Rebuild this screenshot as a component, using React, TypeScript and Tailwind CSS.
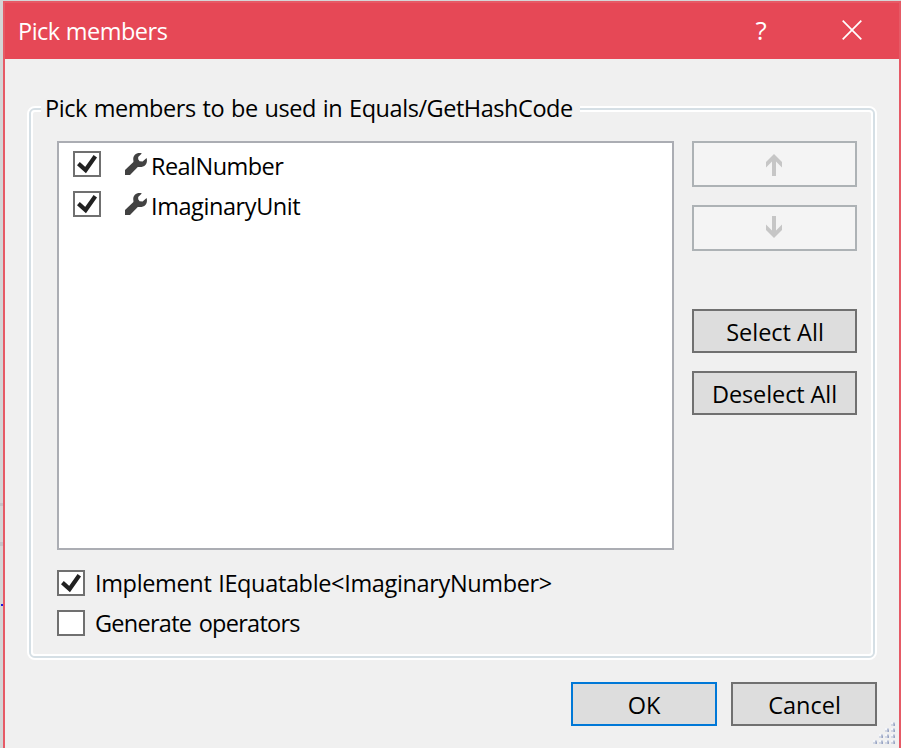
import type { ReactNode } from "react";

function CheckBox({ checked }: { checked?: boolean }) {
  return (
    <span className="block h-[26px] w-[28px] shrink-0 border-2 border-[#707070] bg-white">
      {checked && (
        <svg width="24" height="22" viewBox="0 0 24 22" className="block">
          <path d="M3.4 10.6 L10.6 17 L20.3 3.2" fill="none" stroke="#212121" strokeWidth="4.2" />
        </svg>
      )}
    </span>
  );
}

function Wrench() {
  return (
    <svg width="22" height="22" viewBox="0 0 22 22" className="block shrink-0" fill="#424242">
      <path d="M16.8 0.4 C14.5 -0.3 11.6 0 9.9 1.8 C8.3 3.4 8 5.6 8.4 7.6 L8.4 9 L0 17 L0 22 L5 22 L12.8 14 L14 14 C16.4 14.3 18.8 13.6 20.4 12 C22 10.2 22.3 7.2 21.6 5 L17.6 8.6 L14.6 8.2 L13.2 6.2 L13.2 4 Z" />
    </svg>
  );
}

function Arrow({ down }: { down?: boolean }) {
  return (
    <svg width="16" height="22" viewBox="0 0 16 22" className={down ? "block rotate-180" : "block"}>
      <path d="M8 0 L16 8 V13.5 L10 7.6 V22 H6 V7.6 L0 13.5 V8 Z" fill="#c6c6c6" />
    </svg>
  );
}

function Button({ className, children }: { className: string; children: ReactNode }) {
  return (
    <button className={`flex h-[44px] items-center justify-center border-2 bg-[#dddddd] pt-[2px] leading-[32px] ${className}`}>
      {children}
    </button>
  );
}

function Grip() {
  const cells = [
    [18, 0], [12, 6], [18, 6], [6, 12], [12, 12], [18, 12], [0, 18], [6, 18], [12, 18], [18, 18],
  ];
  return (
    <svg width="22" height="22" viewBox="0 0 22 22" className="absolute bottom-[4px] right-[4px]">
      {cells.map(([x, y]) => (
        <g key={`${x}-${y}`}>
          <rect x={x} y={y} width="4" height="4" fill="#d3d8e4" />
          <rect x={x} y={y} width="2" height="2" fill="#f4f6fa" />
          <rect x={x + 2} y={y + 1} width="2" height="3" fill="#b3bcd2" />
          <rect x={x + 3} y={y + 2} width="1" height="2" fill="#98a4c4" />
        </g>
      ))}
    </svg>
  );
}

export default function App() {
  return (
    <div className="relative flex h-[748px] w-[901px] overflow-hidden bg-[#d5d5d6] pl-[3px] pt-px font-['Open_Sans','Noto_Sans',sans-serif] text-[23.5px] text-black">
      <div className="absolute left-0 top-[503px] h-[3px] w-[3px] bg-[#c3c4c8]" />
      <div className="absolute left-0 top-[542px] h-[4px] w-[3px] bg-[#c3c4c8]" />
      <div className="absolute left-[1px] top-[604px] h-[2px] w-[2px] bg-[#1a1ae0]" />

      <div className="relative flex w-[898px] flex-col border-x-2 border-t-2 border-[#e65a66] bg-[#f0f0f0]">
        <header className="flex h-[56px] shrink-0 items-start bg-[#e64856] pl-[13px] pt-[12px] leading-[32px] text-white">
          <h1 className="flex-1 tracking-[-0.5px] [word-spacing:0.5px]">Pick members</h1>
          <span className="-mt-px mr-[75px] w-[12px] text-center text-[26px]">?</span>
          <svg width="20" height="20" viewBox="0 0 20 20" className="mr-[37px] mt-[5px] block">
            <path d="M0.7 0.7 L19.3 19.3 M19.3 0.7 L0.7 19.3" stroke="#fff" strokeWidth="1.7" fill="none" />
          </svg>
        </header>

        <section className="relative mx-[22px] mt-[47px] h-[554px] shrink-0 rounded-[8px] border-2 border-white">
          <div className="h-full rounded-[6px] border-2 border-[#d5dfe5]">
            <div className="flex h-full flex-col rounded-[4px] border-2 border-white pl-[24px] pt-[29px]">
              <div className="flex h-[409px] gap-[18px]">
                <ul className="w-[617px] border-2 border-[#abadb3] bg-white pl-[14px] pt-[7px]">
                  <li className="flex h-[40px] items-start leading-[32px]">
                    <span className="mr-[24px] mt-px"><CheckBox checked /></span>
                    <span className="mr-[4px] mt-[3px]"><Wrench /></span>
                    <span className="tracking-[-0.55px]">RealNumber</span>
                  </li>
                  <li className="flex h-[40px] items-start leading-[32px]">
                    <span className="mr-[24px] mt-px"><CheckBox checked /></span>
                    <span className="mr-[4px] mt-[3px]"><Wrench /></span>
                    <span className="tracking-[-0.42px]">ImaginaryUnit</span>
                  </li>
                </ul>
                <div className="flex w-[165px] flex-col">
                  <button className="flex h-[46px] items-center justify-center border-2 border-[#adb2b5] bg-[#f4f4f4] pr-px pt-[2px]"><Arrow /></button>
                  <button className="mt-[18px] flex h-[46px] items-center justify-center border-2 border-[#adb2b5] bg-[#f4f4f4] pb-[2px] pr-px"><Arrow down /></button>
                  <Button className="mt-[58px] border-[#707070] pl-px">Select All</Button>
                  <Button className="mt-[18px] border-[#707070] tracking-[-0.1px]">Deselect All</Button>
                </div>
              </div>
              <label className="mt-[17px] flex h-[40px] items-start gap-[10px] leading-[32px]">
                <span className="mt-[3px]"><CheckBox checked /></span>
                <span className="tracking-[-0.35px] [word-spacing:1px]">Implement IEquatable&lt;ImaginaryNumber&gt;</span>
              </label>
              <label className="flex h-[40px] items-start gap-[10px] leading-[32px]">
                <span className="mt-[3px]"><CheckBox /></span>
                <span className="tracking-[-0.73px] [word-spacing:2px]">Generate operators</span>
              </label>
            </div>
          </div>
          <h2 className="absolute left-[12px] top-[-16px] w-[539px] whitespace-nowrap bg-[#f0f0f0] pl-[4px] leading-[32px] tracking-[-0.45px] [word-spacing:1.2px]">
            Pick members to be used in Equals/GetHashCode
          </h2>
        </section>

        <footer className="mt-[22px] flex justify-end gap-[14px] pr-[22px]">
          <Button className="w-[146px] border-[#0078d7]">OK</Button>
          <Button className="w-[146px] border-[#707070] pl-px">Cancel</Button>
        </footer>
        <Grip />
      </div>
    </div>
  );
}
